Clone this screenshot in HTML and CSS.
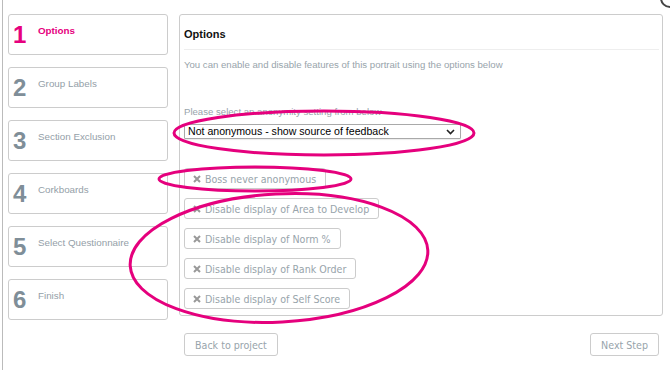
FILE: index.html
```html
<!DOCTYPE html>
<html lang="en">
<head>
    <meta charset="UTF-8">
    <meta name="viewport" content="width=device-width, initial-scale=1.0">
    <title>Portrait Options</title>
    <link rel="stylesheet" href="styles.css">
</head>
<body>

    <div class="frame">
        <div class="wizard">
            <ul class="steps">
                <li class="step active"><span class="step-num">1</span><span class="step-label">Options</span></li>
                <li class="step"><span class="step-num">2</span><span class="step-label">Group Labels</span></li>
                <li class="step"><span class="step-num">3</span><span class="step-label">Section Exclusion</span></li>
                <li class="step"><span class="step-num">4</span><span class="step-label">Corkboards</span></li>
                <li class="step"><span class="step-num">5</span><span class="step-label">Select Questionnaire</span></li>
                <li class="step"><span class="step-num">6</span><span class="step-label">Finish</span></li>
            </ul>

            <div class="content">
                <div class="panel">
                    <h3 class="panel-title">Options</h3>
                    <p class="panel-text">You can enable and disable features of this portrait using the options below</p>

                    <p class="panel-text select-label">Please select an anonymity setting from below</p>
                    <div class="select-wrap">
                        <select class="anon-select">
                            <option>Not anonymous - show source of feedback</option>
                            <option>Anonymous</option>
                        </select>
                        <svg class="select-arrow" width="9" height="6" viewBox="0 0 9 6">
                            <path d="M1 1 L4.5 4.5 L8 1" fill="none" stroke="#222" stroke-width="1.6"/>
                        </svg>
                    </div>

                    <div class="toggles">
                        <button class="toggle-btn"><svg class="x-icon" width="8" height="8" viewBox="0 0 8 8"><path d="M1 1 L7 7 M7 1 L1 7" stroke="#999" stroke-width="2"/></svg>Boss never anonymous</button>
                        <button class="toggle-btn"><svg class="x-icon" width="8" height="8" viewBox="0 0 8 8"><path d="M1 1 L7 7 M7 1 L1 7" stroke="#999" stroke-width="2"/></svg>Disable display of Area to Develop</button>
                        <button class="toggle-btn"><svg class="x-icon" width="8" height="8" viewBox="0 0 8 8"><path d="M1 1 L7 7 M7 1 L1 7" stroke="#999" stroke-width="2"/></svg>Disable display of Norm %</button>
                        <button class="toggle-btn"><svg class="x-icon" width="8" height="8" viewBox="0 0 8 8"><path d="M1 1 L7 7 M7 1 L1 7" stroke="#999" stroke-width="2"/></svg>Disable display of Rank Order</button>
                        <button class="toggle-btn"><svg class="x-icon" width="8" height="8" viewBox="0 0 8 8"><path d="M1 1 L7 7 M7 1 L1 7" stroke="#999" stroke-width="2"/></svg>Disable display of Self Score</button>
                    </div>
                </div>

                <div class="actions">
                    <button class="nav-btn">Back to project</button>
                    <button class="nav-btn">Next Step</button>
                </div>
            </div>
        </div>

        <!-- annotation marks drawn over the screenshot -->
        <svg class="marks" width="670" height="370" viewBox="0 0 670 370">
            <ellipse cx="324" cy="133" rx="150" ry="22" fill="none" stroke="#e5007d" stroke-width="3"/>
            <ellipse cx="255" cy="179" rx="96" ry="12" fill="none" stroke="#e5007d" stroke-width="3"/>
            <ellipse cx="279" cy="258" rx="149" ry="64" fill="none" stroke="#e5007d" stroke-width="3" transform="rotate(-3 279 258)"/>
        </svg>
        <svg class="corner-icon" width="12" height="10" viewBox="0 0 12 10">
            <circle cx="12" cy="-2" r="9" fill="#fff" stroke="#444" stroke-width="2"/>
        </svg>
    </div>

</body>
</html>
```

FILE: styles.css
```css
* {
    box-sizing: border-box;
}
body {
    margin: 0;
    background: #fff;
    font-family: "Liberation Sans", Arial, sans-serif;
}
.frame {
    position: relative;
    margin-left: 2px;
    border-left: 1px solid #bbb;
    height: 370px;
    padding: 14px 0 0 5px;
    overflow: hidden;
}
.wizard {
    display: flex;
    gap: 11px;
}
.steps {
    list-style: none;
    margin: 0;
    padding: 0;
    width: 160px;
    display: flex;
    flex-direction: column;
    gap: 12px;
}
.step {
    display: flex;
    height: 41px;
    padding: 8px 0 0 4px;
    border: 1px solid #ccc;
    border-radius: 3px;
}
.step-num {
    width: 25px;
    font-size: 24px;
    line-height: 24px;
    font-weight: bold;
    color: #7f8e98;
}
.step-label {
    margin-top: 2px;
    font-size: 9.8px;
    line-height: 12px;
    color: #94a0a8;
}
.step.active .step-num,
.step.active .step-label {
    color: #e6007e;
}
.step.active .step-label {
    font-weight: bold;
}
.content {
    width: 484px;
}
.panel {
    height: 302px;
    border: 1px solid #ccc;
    border-radius: 3px;
    padding: 12px 3px 0 4px;
}
.panel-title {
    margin: 0;
    font-size: 11px;
    line-height: 14px;
    color: #111;
    padding-bottom: 8px;
    border-bottom: 1px solid #eee;
}
.panel-text {
    margin: 8px 0 0;
    font-size: 9.6px;
    line-height: 13px;
    color: #98a4ab;
}
.select-label {
    margin-top: 34px;
}
.select-wrap {
    position: relative;
    width: 277px;
    margin-top: 6px;
}
.anon-select {
    display: block;
    appearance: none;
    -webkit-appearance: none;
    width: 100%;
    height: 15px;
    padding: 0 0 0 3px;
    border: 1px solid #a9a9a9;
    border-radius: 1px;
    background: #fff;
    font-family: "Liberation Sans", Arial, sans-serif;
    font-size: 10.6px;
    line-height: 13px;
    color: #000;
    box-shadow: 0 1px 1px rgba(0, 0, 0, 0.08);
}
.select-arrow {
    position: absolute;
    right: 6px;
    top: 5px;
}
.toggles {
    margin-top: 29px;
    display: flex;
    flex-direction: column;
    align-items: flex-start;
    gap: 9px;
}
.toggle-btn,
.nav-btn {
    background: #fff;
    border: 1px solid #ccc;
    border-radius: 3px;
    font-family: "DejaVu Sans Condensed", "DejaVu Sans", Verdana, sans-serif;
    font-stretch: condensed;
    font-size: 10.6px;
    color: #98a4ab;
    cursor: pointer;
}
.toggle-btn {
    display: flex;
    align-items: center;
    height: 21px;
    padding: 0 9px 0 8px;
}
.x-icon {
    margin-right: 4px;
}
.actions {
    display: flex;
    justify-content: space-between;
    margin-top: 17px;
    padding: 0 4px 0 5px;
}
.nav-btn {
    height: 23px;
    padding: 0 10px;
}
.marks {
    position: absolute;
    left: -3px;
    top: 0;
    pointer-events: none;
}
.corner-icon {
    position: absolute;
    right: 0;
    top: 0;
}
```
